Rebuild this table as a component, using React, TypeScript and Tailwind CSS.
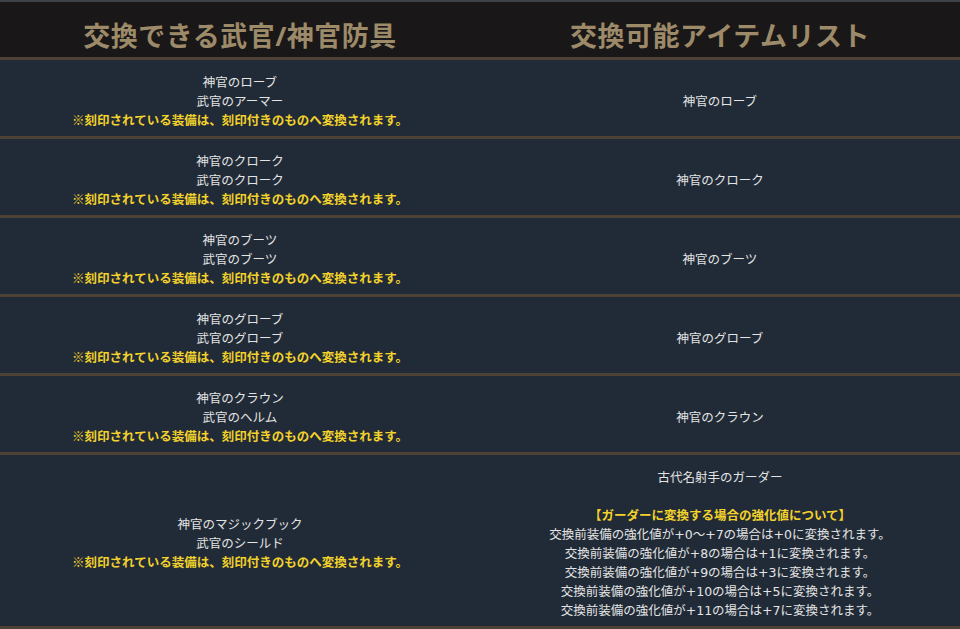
const rows = [
  { from: ['神官のローブ', '武官のアーマー'], to: '神官のローブ' },
  { from: ['神官のクローク', '武官のクローク'], to: '神官のクローク' },
  { from: ['神官のブーツ', '武官のブーツ'], to: '神官のブーツ' },
  { from: ['神官のグローブ', '武官のグローブ'], to: '神官のグローブ' },
  { from: ['神官のクラウン', '武官のヘルム'], to: '神官のクラウン' },
];

const NOTE = '※刻印されている装備は、刻印付きのものへ変換されます。';

const guarderLines = [
  '交換前装備の強化値が+0～+7の場合は+0に変換されます。',
  '交換前装備の強化値が+8の場合は+1に変換されます。',
  '交換前装備の強化値が+9の場合は+3に変換されます。',
  '交換前装備の強化値が+10の場合は+5に変換されます。',
  '交換前装備の強化値が+11の場合は+7に変換されます。',
];

function FromCell({ names }: { names: string[] }) {
  return (
    <div className="flex flex-col items-center justify-center">
      {names.map((n) => (
        <div key={n}>{n}</div>
      ))}
      <div className="font-bold text-[#f3d22b]">{NOTE}</div>
    </div>
  );
}

export default function App() {
  return (
    <div
      className="w-[960px] h-[629px] overflow-hidden bg-[#212b37] text-[12.5px] leading-[19px] text-[#e4e4e4] text-center border-t-2 border-[#3d4148]"
      style={{ fontFamily: '"Open Sans", "Noto Sans CJK JP", sans-serif' }}
    >
      <div className="grid grid-cols-2 h-[58px] bg-[#191717] border-b-[3px] border-[#4d4233] items-center pt-[12px]">
        <div className="text-[27px] font-bold text-[#9c8a69] tracking-[0.5px]">交換できる武官/神官防具</div>
        <div className="text-[27px] font-bold text-[#9c8a69] tracking-[0.5px]">交換可能アイテムリスト</div>
      </div>

      {rows.map((r) => (
        <div key={r.to} className="grid grid-cols-2 h-[79px] border-b-[3px] border-[#4d4233] pt-[6px]">
          <FromCell names={r.from} />
          <div className="flex items-center justify-center">{r.to}</div>
        </div>
      ))}

      <div className="grid grid-cols-2 h-[174px] border-b-[3px] border-[#4d4233] pt-[6px]">
        <FromCell names={['神官のマジックブック', '武官のシールド']} />
        <div className="flex flex-col items-center justify-center">
          <div>古代名射手のガーダー</div>
          <div className="h-[19px]" />
          <div className="font-bold text-[#f3d22b]">【ガーダーに変換する場合の強化値について】</div>
          <div style={{ fontFamily: '"DejaVu Sans", "Noto Sans CJK JP", sans-serif' }}>
            {guarderLines.map((l) => (
              <div key={l}>{l}</div>
            ))}
          </div>
        </div>
      </div>
    </div>
  );
}
